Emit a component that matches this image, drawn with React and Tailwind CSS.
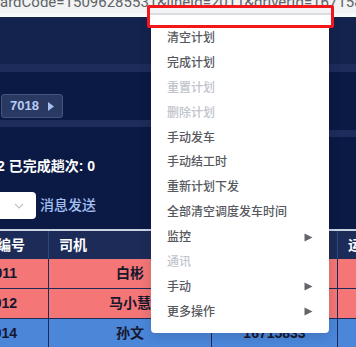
import React from 'react';

const menuItems = [
    { label: '清空计划' },
    { label: '完成计划' },
    { label: '重置计划', disabled: true },
    { label: '删除计划', disabled: true },
    { label: '手动发车' },
    { label: '手动结工时' },
    { label: '重新计划下发' },
    { label: '全部清空调度发车时间' },
    { label: '监控', sub: true },
    { label: '通讯', disabled: true },
    { label: '手动', sub: true },
    { label: '更多操作', sub: true },
];

const rows = [
    { no: '2011', driver: '白彬', card: '16715831', bg: 'bg-[#f47676]' },
    { no: '2012', driver: '马小慧', card: '16715832', bg: 'bg-[#f47676]' },
    { no: '2014', driver: '孙文', card: '16715833', bg: 'bg-[#4b86d9]' },
];

const Arrow = ({ className }) => (
    <svg width="9" height="9" viewBox="0 0 9 9" className={className}>
        <path d="M0.5 0.5 L8.5 4.5 L0.5 8.5 Z" fill="currentColor" />
    </svg>
);

const ContextMenu = () => (
    <div className='absolute left-[151px] top-[15px] w-[178px] h-[318px] bg-white rounded-b-[4px] shadow-[0_2px_12px_rgba(0,0,0,0.15)] pt-[10.5px]'>
        {menuItems.map((item) => (
            <div
                key={item.label}
                className={`h-[24.9px] flex items-center justify-between pl-[16px] pr-[16px] text-[12px] font-medium leading-none ${item.disabled ? 'text-[#c0c4cc]' : 'text-[#56585d]'}`}
            >
                <span>{item.label}</span>
                {item.sub && <Arrow className='text-[#63656a]' />}
            </div>
        ))}
    </div>
);

export default function App() {
    return (
        <div className="relative w-[356px] h-[347px] overflow-hidden bg-[#0b1a44] font-['Liberation_Sans','Noto_Sans_CJK_SC',sans-serif]">
            {/* address bar strip */}
            <div className='h-[13px] bg-[#f1f3f4] overflow-hidden whitespace-nowrap'>
                <div className="-mt-[7px] text-[15px] leading-[18px] text-[#5f6368] font-['Roboto',sans-serif]">
                    ardCode=15096285531&amp;lineId=2011&amp;driverId=16715833&amp;unitCode=0&amp;lineCode=
                </div>
            </div>
            <div className='h-[4px] bg-[#f8f9fa]' />
            <div className='h-[47px] bg-[#14234e]' />
            <div className='h-[8px] bg-[#1d2c5b]' />

            <div className='flex h-[157px]'>
                <div className='w-[240px] flex flex-col'>
                    <div className='mt-[22px] ml-[1px] w-[62px] h-[24px] flex items-center justify-between pl-[8px] pr-[8px] bg-[#2a3961] border border-[#45547c] rounded-[3px]'>
                        <span className='text-[13px] font-bold text-[#b7ccf6]'>7018</span>
                        <svg width="6" height="9" viewBox="0 0 6 9">
                            <path d="M0 0 L6 4.5 L0 9 Z" fill="#a8bff0" />
                        </svg>
                    </div>
                    <div className='mt-[2px] h-[7px] bg-[#1d2c5b]' />
                    <div className='mt-[29px] -ml-[3px] h-[20px] flex items-center text-[14px] font-bold text-white whitespace-nowrap'>
                        2 已完成趟次: 0
                    </div>
                    <div className='mt-[16px] flex items-center'>
                        <div className='-ml-[14px] w-[50px] h-[27px] bg-white rounded-[4px] flex items-center justify-end pr-[12px]'>
                            <svg width="10" height="6" viewBox="0 0 10 6">
                                <path d="M1 1 L5 5 L9 1" fill="none" stroke="#c0c4cc" strokeWidth="1.2" />
                            </svg>
                        </div>
                        <span className='ml-[4px] text-[14px] font-medium text-[#a3c0f4]'>消息发送</span>
                    </div>
                </div>
                <div className='flex-1 flex flex-col'>
                    <div className='mt-[58px] h-[7px] bg-[#1d2c5b]' />
                </div>
            </div>

            <div className='h-[2px] bg-[#c9d1e3]' />

            {/* table */}
            <div className='flex h-[28px] bg-[#1c2b58] text-[14px] font-bold text-white'>
                <div className='w-[49px] border-r border-[#2c4a84] flex items-center overflow-hidden'>
                    <span className='-ml-[3px] whitespace-nowrap'>编号</span>
                </div>
                <div className='w-[163px] border-r border-[#1c2b58] flex items-center pl-[10px]'>司机</div>
                <div className='w-[126px] border-r border-[#2c4a84] flex items-center pl-[10px]'>卡号</div>
                <div className='flex-1 flex items-center pl-[10px] whitespace-nowrap overflow-hidden'>运营状态</div>
            </div>
            {rows.map((row) => (
                <div key={row.no} className={`flex h-[30px] border-b border-[#1b2a57] ${row.bg} text-[14px] font-bold text-[#17172e]`}>
                    <div className='w-[49px] border-r border-[#1b2a57] flex items-center justify-end pr-[31px] overflow-hidden whitespace-nowrap'>
                        {row.no}
                    </div>
                    <div className='w-[163px] border-r border-[#1b2a57] flex items-center justify-center'>{row.driver}</div>
                    <div className='w-[126px] border-r border-[#1b2a57] flex items-center justify-center'>{row.card}</div>
                    <div className='flex-1' />
                </div>
            ))}

            <ContextMenu />

            {/* highlight box */}
            <div className='absolute left-[147px] top-[5px] w-[187px] h-[23px] border-[3px] border-[#f3161b] rounded-[2px] overflow-hidden flex flex-col'>
                <div className='h-[5px] bg-[#f1f3f4]' />
                <div className='h-[2px] bg-[#dadce0]' />
                <div className='flex-1 bg-white' />
            </div>
        </div>
    );
}
